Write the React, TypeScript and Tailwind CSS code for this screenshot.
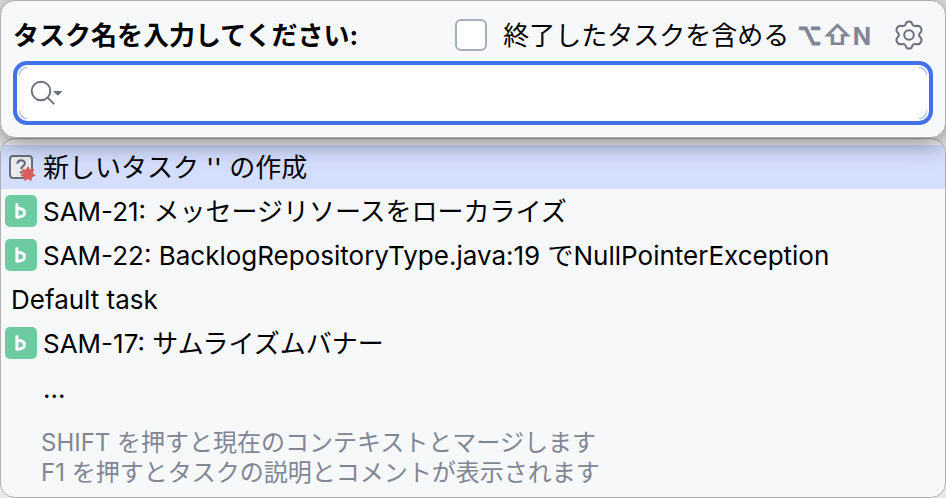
import { useState } from 'react';

const FONT = "font-[Inter,'Noto_Sans_CJK_JP',sans-serif]";

const TASKS = [
  { id: 'new', label: "新しいタスク '' の作成", icon: 'create' },
  { id: 'SAM-21', label: 'SAM-21: メッセージリソースをローカライズ', icon: 'backlog' },
  { id: 'SAM-22', label: 'SAM-22: BacklogRepositoryType.java:19 でNullPointerException', icon: 'backlog' },
  { id: 'default', label: 'Default task', icon: null },
  { id: 'SAM-17', label: 'SAM-17: サムライズムバナー', icon: 'backlog' },
];

function SearchIcon() {
  return (
    <svg width="34" height="28" viewBox="0 0 34 28" fill="none" className="shrink-0" aria-hidden="true">
      <circle cx="12" cy="12" r="9.3" stroke="#6c707e" strokeWidth="1.9" />
      <path d="M18.6 18.6 L25.2 25.2" stroke="#6c707e" strokeWidth="1.9" />
      <path d="M24 12 H33.6 L28.8 16.8 Z" fill="#6c707e" />
    </svg>
  );
}

function GearIcon() {
  return (
    <svg width="28" height="30" viewBox="0 0 28 30" fill="none" stroke="#6c707e" strokeWidth="2" strokeLinejoin="round" aria-hidden="true">
      <path d="M11.6 2.2 Q14 0.8 16.4 2.2 L17.6 4.7 Q18.4 6 20 5.9 L22.8 5.7 Q25 5.9 26 8 Q27 10.1 26 11.8 L24.4 13.9 Q23.7 15 24.4 16.1 L26 18.2 Q27 19.9 26 22 Q25 24.1 22.8 24.3 L20 24.1 Q18.4 24 17.6 25.3 L16.4 27.8 Q14 29.2 11.6 27.8 L10.4 25.3 Q9.6 24 8 24.1 L5.2 24.3 Q3 24.1 2 22 Q1 19.9 2 18.2 L3.6 16.1 Q4.3 15 3.6 13.9 L2 11.8 Q1 10.1 2 8 Q3 5.9 5.2 5.7 L8 5.9 Q9.6 6 10.4 4.7 Z" />
      <circle cx="14" cy="15" r="4.8" />
    </svg>
  );
}

function CreateIcon() {
  return (
    <svg width="32" height="32" viewBox="0 0 32 32" fill="none" className="shrink-0" aria-hidden="true">
      <rect x="5" y="5" width="22" height="22" rx="3" fill="#ebecf0" stroke="#6c707e" strokeWidth="2" />
      <path d="M12.4 12.8 C12.4 8.2 19.9 8.2 19.9 12.4 C19.9 15.1 16.2 15 16.2 18" stroke="#6c707e" strokeWidth="2.2" />
      <circle cx="16.2" cy="21.3" r="1.4" fill="#6c707e" />
      <path d="M23 15 L25.2 18.5 L29.3 18 L27.9 21.9 L30.8 24.8 L26.9 26.1 L26.5 30.2 L23 28 L19.5 30.2 L19.1 26.1 L15.2 24.8 L18.1 21.9 L16.7 18 L20.8 18.5 Z" fill="#db5c5c" />
    </svg>
  );
}

function BacklogIcon() {
  return (
    <svg width="32" height="32" viewBox="0 0 32 32" fill="none" className="shrink-0" aria-hidden="true">
      <rect width="32" height="32" rx="5" fill="#6dcba2" />
      <path
        d="M11.9 9.6 V22.2 C15.8 22.4 19.6 21 19.6 17.5 C19.6 14.6 16.6 13.6 13.6 13.4"
        stroke="white"
        strokeWidth="3"
        strokeLinecap="round"
        strokeLinejoin="round"
      />
    </svg>
  );
}

export default function App() {
  const [query, setQuery] = useState('');
  const [includeClosed, setIncludeClosed] = useState(false);

  return (
    <div className={`${FONT} bg-[#e9e9e9] text-[26px] leading-8 text-black`}>
      <section className="relative rounded-[15px] border border-[#b0b0b2] bg-[#f7f8fa] px-3 pt-[18px] pb-3 shadow-[0_4px_24px_rgba(0,0,0,0.5)]">
        <header className="flex h-8 items-center">
          <label htmlFor="task-name" className="flex-1 pt-0.5 font-bold whitespace-nowrap">
            タスク名を入力してください:
          </label>
          <label className="flex items-center gap-4 whitespace-nowrap">
            <input
              type="checkbox"
              checked={includeClosed}
              onChange={(e) => setIncludeClosed(e.target.checked)}
              className="size-8 appearance-none rounded-md border-2 border-[#a8adbd] bg-white checked:bg-[#4272e8]"
            />
            <span className="pt-0.5">終了したタスクを含める</span>
          </label>
          <kbd className="ml-2 pt-0.5 font-[Inter,'DejaVu_Sans',sans-serif] text-2xl leading-8 font-bold text-[#818594]">
            <span className="[-webkit-text-stroke:1px_#818594]">⌥</span>
            <span className="text-[28px] leading-8">⇧</span>N
          </kbd>
          <button type="button" aria-label="設定" className="mr-2.5 ml-6">
            <GearIcon />
          </button>
        </header>

        <div className="relative mt-2.5 flex h-16 items-center rounded-[14px] border-4 border-[#4272e8] bg-white pl-3">
          <SearchIcon />
          <input
            id="task-name"
            type="text"
            value={query}
            onChange={(e) => setQuery(e.target.value)}
            className="h-full min-w-0 flex-1 px-2 outline-none"
          />
          <span className="absolute top-0.5 left-0.5 size-2 rounded-tl-lg border-t border-l border-[#8fadf2]" />
          <span className="absolute top-0.5 right-0.5 size-2 rounded-tr-lg border-t border-r border-[#8fadf2]" />
          <span className="absolute bottom-0.5 left-0.5 size-2 rounded-bl-lg border-b border-l border-[#8fadf2]" />
          <span className="absolute right-0.5 bottom-0.5 size-2 rounded-br-lg border-r border-b border-[#8fadf2]" />
        </div>
      </section>

      <section className="overflow-hidden rounded-[15px] border border-[#b0b0b2] bg-[#f7f8fa] pt-1.5 pb-[9px]">
        <ul>
          {TASKS.map((task) => (
            <li key={task.id} className={task.icon === 'create' ? 'bg-[#d4deff]' : ''}>
              <button
                type="button"
                className={`flex h-11 w-full items-center gap-1.5 text-left whitespace-nowrap ${task.icon ? 'pl-1' : 'pl-2.5'}`}
              >
                {task.icon === 'create' && <CreateIcon />}
                {task.icon === 'backlog' && <BacklogIcon />}
                <span className="pt-0.5">{task.label}</span>
              </button>
            </li>
          ))}
        </ul>
        <button type="button" className="block h-12 w-full pl-[42px] text-left">
          ...
        </button>
        <p className="mt-[15px] pl-10 text-2xl leading-[30px] text-[#818594]">
          SHIFT を押すと現在のコンテキストとマージします
          <br />
          F1 を押すとタスクの説明とコメントが表示されます
        </p>
      </section>
    </div>
  );
}
